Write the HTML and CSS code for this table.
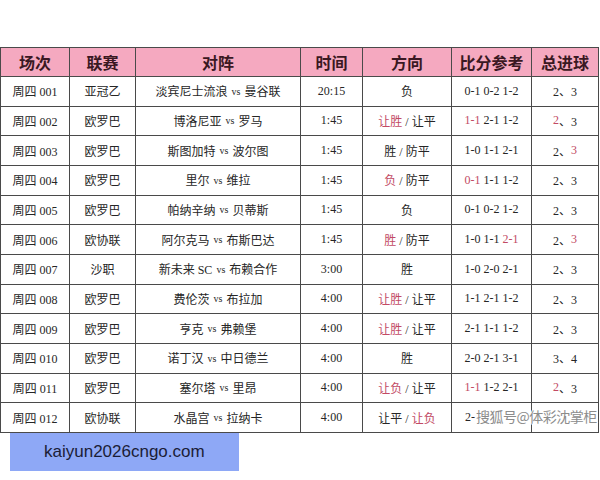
FILE: index.html
```html
<!DOCTYPE html>
<html lang="zh">
<head>
<meta charset="utf-8">
<title>竞彩推荐</title>
<link rel="stylesheet" href="styles.css">
</head>
<body>
<div class="page">
  <div class="sheet">
    <div class="grid">
      <div class="h">场次</div><div class="h">联赛</div><div class="h">对阵</div><div class="h">时间</div><div class="h">方向</div><div class="h">比分参考</div><div class="h">总进球</div>

      <div class="c">周四 001</div><div class="c">亚冠乙</div><div class="c">淡宾尼士流浪 <span class="vs">vs</span> 曼谷联</div><div class="c">20:15</div><div class="c">负</div><div class="c">0-1 0-2 1-2</div><div class="c">2、3</div>

      <div class="c">周四 002</div><div class="c">欧罗巴</div><div class="c">博洛尼亚 <span class="vs">vs</span> 罗马</div><div class="c">1:45</div><div class="c"><span class="r">让胜</span> / 让平</div><div class="c"><span class="r">1-1</span> 2-1 1-2</div><div class="c"><span class="r">2</span>、3</div>

      <div class="c">周四 003</div><div class="c">欧罗巴</div><div class="c">斯图加特 <span class="vs">vs</span> 波尔图</div><div class="c">1:45</div><div class="c">胜 / 防平</div><div class="c">1-0 1-1 2-1</div><div class="c">2、<span class="r">3</span></div>

      <div class="c">周四 004</div><div class="c">欧罗巴</div><div class="c">里尔 <span class="vs">vs</span> 维拉</div><div class="c">1:45</div><div class="c"><span class="r">负</span> / 防平</div><div class="c"><span class="r">0-1</span> 1-1 1-2</div><div class="c">2、3</div>

      <div class="c">周四 005</div><div class="c">欧罗巴</div><div class="c">帕纳辛纳 <span class="vs">vs</span> 贝蒂斯</div><div class="c">1:45</div><div class="c">负</div><div class="c">0-1 0-2 1-2</div><div class="c">2、3</div>

      <div class="c">周四 006</div><div class="c">欧协联</div><div class="c">阿尔克马 <span class="vs">vs</span> 布斯巴达</div><div class="c">1:45</div><div class="c"><span class="r">胜</span> / 防平</div><div class="c">1-0 1-1 <span class="r">2-1</span></div><div class="c">2、<span class="r">3</span></div>

      <div class="c">周四 007</div><div class="c">沙职</div><div class="c">新未来 SC <span class="vs">vs</span> 布赖合作</div><div class="c">3:00</div><div class="c">胜</div><div class="c">1-0 2-0 2-1</div><div class="c">2、3</div>

      <div class="c">周四 008</div><div class="c">欧罗巴</div><div class="c">费伦茨 <span class="vs">vs</span> 布拉加</div><div class="c">4:00</div><div class="c"><span class="r">让胜</span> / 让平</div><div class="c">1-1 2-1 1-2</div><div class="c">2、3</div>

      <div class="c">周四 009</div><div class="c">欧罗巴</div><div class="c">亨克 <span class="vs">vs</span> 弗赖堡</div><div class="c">4:00</div><div class="c"><span class="r">让胜</span> / 让平</div><div class="c">2-1 1-1 1-2</div><div class="c">2、3</div>

      <div class="c">周四 010</div><div class="c">欧罗巴</div><div class="c">诺丁汉 <span class="vs">vs</span> 中日德兰</div><div class="c">4:00</div><div class="c">胜</div><div class="c">2-0 2-1 3-1</div><div class="c">3、4</div>

      <div class="c">周四 011</div><div class="c">欧罗巴</div><div class="c">塞尔塔 <span class="vs">vs</span> 里昂</div><div class="c">4:00</div><div class="c"><span class="r">让负</span> / 让平</div><div class="c"><span class="r">1-1</span> 1-2 2-1</div><div class="c"><span class="r">2</span>、3</div>

      <div class="c">周四 012</div><div class="c">欧协联</div><div class="c">水晶宫 <span class="vs">vs</span> 拉纳卡</div><div class="c">4:00</div><div class="c">让平 / <span class="r">让负</span></div><div class="c left">2-</div><div class="c"></div>
    </div>
    <div class="watermark">搜狐号@体彩沈掌柜</div>
  </div>
  <div class="banner">kaiyun2026cngo.com</div>
</div>
</body>
</html>
```

FILE: styles.css
```css
html, body {
  margin: 0;
  padding: 0;
  background: #ffffff;
}

.page {
  width: 600px;
  height: 480px;
  padding-top: 47px;
  box-sizing: border-box;
}

.sheet {
  position: relative;
  width: 599px;
}

.grid {
  display: grid;
  grid-template-columns: 68px 65px 164px 61px 88px 79px 66px;
  grid-template-rows: 28px repeat(12, 1fr);
  gap: 1px;
  padding: 1px;
  height: 386px;
  box-sizing: border-box;
  background: #4a4a4a;
}

.h {
  background: #f5a9c0;
  color: #3a1822;
  font-family: "Liberation Serif", "Noto Sans CJK SC", serif;
  font-weight: 700;
  font-size: 16px;
  display: flex;
  align-items: center;
  justify-content: center;
}

.c {
  background: #ffffff;
  color: #262626;
  font-family: "Liberation Serif", "Noto Sans CJK SC", serif;
  font-size: 12px;
  display: flex;
  align-items: center;
  justify-content: center;
  white-space: pre;
}

.c.left {
  justify-content: flex-start;
  padding-left: 13px;
}

.vs {
  font-size: 10px;
  margin: 0 1px;
}

.r {
  color: #c24a64;
}

.watermark {
  position: absolute;
  left: 476px;
  top: 359px;
  font-family: "Noto Sans CJK SC", sans-serif;
  font-size: 14px;
  color: #8c8c8c;
  text-shadow: 0 0 1px #ffffff, 1px 0 0 #ffffff, -1px 0 0 #ffffff, 0 1px 0 #ffffff, 0 -1px 0 #ffffff;
  letter-spacing: -0.5px;
}

.banner {
  margin-left: 10px;
  width: 229px;
  height: 38px;
  background: #8ea8f6;
  color: #1b1d36;
  font-family: "Liberation Sans", Arial, sans-serif;
  font-size: 17px;
  display: flex;
  align-items: center;
  padding-left: 34px;
  box-sizing: border-box;
}
```
